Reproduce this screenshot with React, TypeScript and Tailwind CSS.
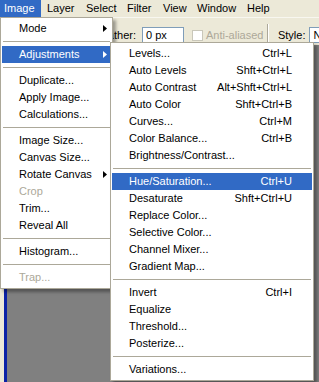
import React from "react";

type Item =
  | { sep: true }
  | { label: string; shortcut?: string; arrow?: boolean; disabled?: boolean; active?: boolean };

const leftItems: Item[] = [
  { label: "Mode", arrow: true },
  { sep: true },
  { label: "Adjustments", arrow: true, active: true },
  { sep: true },
  { label: "Duplicate..." },
  { label: "Apply Image..." },
  { label: "Calculations..." },
  { sep: true },
  { label: "Image Size..." },
  { label: "Canvas Size..." },
  { label: "Rotate Canvas", arrow: true },
  { label: "Crop", disabled: true },
  { label: "Trim..." },
  { label: "Reveal All" },
  { sep: true },
  { label: "Histogram..." },
  { sep: true },
  { label: "Trap...", disabled: true },
];

const subItems: Item[] = [
  { label: "Levels...", shortcut: "Ctrl+L" },
  { label: "Auto Levels", shortcut: "Shft+Ctrl+L" },
  { label: "Auto Contrast", shortcut: "Alt+Shft+Ctrl+L" },
  { label: "Auto Color", shortcut: "Shft+Ctrl+B" },
  { label: "Curves...", shortcut: "Ctrl+M" },
  { label: "Color Balance...", shortcut: "Ctrl+B" },
  { label: "Brightness/Contrast..." },
  { sep: true },
  { label: "Hue/Saturation...", shortcut: "Ctrl+U", active: true },
  { label: "Desaturate", shortcut: "Shft+Ctrl+U" },
  { label: "Replace Color..." },
  { label: "Selective Color..." },
  { label: "Channel Mixer..." },
  { label: "Gradient Map..." },
  { sep: true },
  { label: "Invert", shortcut: "Ctrl+I" },
  { label: "Equalize" },
  { label: "Threshold..." },
  { label: "Posterize..." },
  { sep: true },
  { label: "Variations..." },
];

function Arrow({ white }: { white?: boolean }) {
  return (
    <svg width="4" height="7" viewBox="0 0 4 7" className="block">
      <path d="M0 0 L4 3.5 L0 7 Z" fill={white ? "#ffffff" : "#000000"} />
    </svg>
  );
}

function MenuRows({ items, prRow }: { items: Item[]; prRow: string }) {
  return (
    <>
      {items.map((it, i) => {
        if ("sep" in it) {
          return (
            <div key={i} className="h-[9px] flex items-center px-[1px]">
              <div className="h-[1px] w-full bg-[#aca899]" />
            </div>
          );
        }
        const color = it.active ? "text-white" : it.disabled ? "text-[#aca899]" : "text-black";
        return (
          <div
            key={i}
            className={`h-[17px] flex items-center pl-[17px] ${prRow} whitespace-nowrap ${color} ${
              it.active ? "bg-[#316ac5]" : ""
            }`}
          >
            <span className="flex-1 leading-[17px]">{it.label}</span>
            {it.shortcut && <span className="leading-[17px]">{it.shortcut}</span>}
            {it.arrow && <Arrow white={it.active} />}
          </div>
        );
      })}
    </>
  );
}

export default function App() {
  const menus = [
    { label: "Image", w: "w-[41px]", pl: "pl-[4px]", active: true },
    { label: "Layer", w: "w-[39px]", pl: "pl-[6px]" },
    { label: "Select", w: "w-[41px]", pl: "pl-[6px]" },
    { label: "Filter", w: "w-[36px]", pl: "pl-[6px]" },
    { label: "View", w: "w-[34px]", pl: "pl-[6px]" },
    { label: "Window", w: "w-[50px]", pl: "pl-[6px]" },
    { label: "Help", w: "w-[40px]", pl: "pl-[6px]" },
  ];
  return (
    <div className="relative w-[319px] h-[382px] overflow-hidden bg-[#808080] font-['Liberation_Sans',Arial,sans-serif] text-[11px] text-black flex flex-col">
      {/* menu bar */}
      <div className="h-[17px] bg-[#ece9d8] flex shrink-0">
        {menus.map((m) => (
          <div
            key={m.label}
            className={`${m.w} ${m.pl} h-[17px] leading-[17px] whitespace-nowrap shrink-0 ${
              m.active ? "bg-[#316ac5] text-white" : "text-black"
            }`}
          >
            {m.label}
          </div>
        ))}
      </div>
      {/* options toolbar */}
      <div className="h-[28px] bg-[#ece9d8] border-t border-[#f8f7f0] flex items-center pt-[7px] shrink-0 whitespace-nowrap overflow-hidden">
        <span className="ml-[95px] shrink-0 leading-[16px]">Feather:</span>
        <div className="ml-[6px] shrink-0 w-[42px] h-[16px] border border-[#7f9db9] bg-white pl-[3px] leading-[14px]">0 px</div>
        <div className="ml-[8px] shrink-0 w-[11px] h-[11px] border border-[#c9c7ba] bg-white" />
        <div className="ml-[3px] shrink-0 w-[61px] text-[#aca899] leading-[16px]">Anti-aliased</div>
        <div className="shrink-0 h-[22px] w-[2px] border-l border-[#aca899] border-r border-r-white" />
        <span className="ml-[9px] shrink-0 leading-[16px]">Style:</span>
        <div className="ml-[4px] shrink-0 w-[60px] h-[16px] border border-[#7f9db9] bg-white pl-[3px] leading-[14px]">Normal</div>
      </div>
      {/* workspace */}
      <div className="flex-1 flex">
        <div className="w-[4px] bg-[#ece9d8]" />
        <div className="w-[3px] bg-[#0b22a6]" />
        <div className="flex-1 bg-[#808080]" />
      </div>

      {/* Image menu */}
      <div className="absolute left-0 top-[17px] w-[113px] bg-white border border-[#aca899] py-[2px] px-[1px] shadow-[3px_3px_3px_rgba(0,0,0,0.35)] z-10">
        <MenuRows items={leftItems} prRow="pr-[4px]" />
      </div>

      {/* Adjustments submenu */}
      <div className="absolute left-[110px] top-[42px] w-[204px] bg-white border border-[#aca899] py-[2px] px-[1px] shadow-[3px_3px_3px_rgba(0,0,0,0.35)] z-20">
        <MenuRows items={subItems} prRow="pr-[20px]" />
      </div>
    </div>
  );
}
